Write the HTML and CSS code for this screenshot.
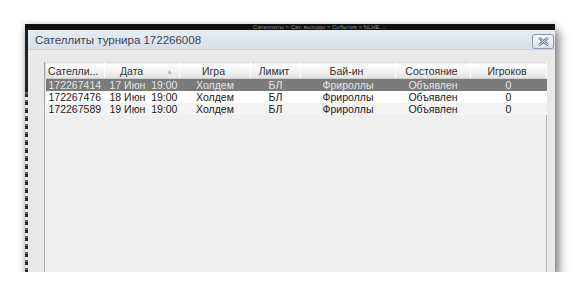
FILE: index.html
```html
<!DOCTYPE html>
<html lang="ru">
<head>
    <meta charset="UTF-8">
    <title>Сателлиты турнира 172266008</title>
    <link rel="stylesheet" href="styles.css">
</head>
<body>
    <div class="frame">
        <div class="topbar"><span>Сателлиты &gt; Сат. выходы &gt; События &gt; NLHE ...</span></div>
        <div class="side"></div>
        <div class="dialog">
            <div class="titlebar">
                <span class="title">Сателлиты турнира 172266008</span>
                <button class="close" title="Закрыть">
                    <svg width="13" height="9" viewBox="0 0 13 9">
                        <path d="M2 1 L11 8 M11 1 L2 8" stroke="#5b6675" stroke-width="2.4" fill="none"/>
                        <path d="M2 1 L11 8 M11 1 L2 8" stroke="#f4f6f8" stroke-width="1" fill="none"/>
                    </svg>
                </button>
            </div>
            <div class="content">
                <div class="list">
                    <table class="grid">
                        <colgroup>
                            <col class="c1"><col class="c2"><col class="c3"><col class="c4">
                            <col class="c5"><col class="c6"><col class="c7">
                        </colgroup>
                        <thead>
                            <tr>
                                <th class="left">Сателли...</th>
                                <th>Дата <span class="sort">&#9650;</span></th>
                                <th>Игра</th>
                                <th>Лимит</th>
                                <th>Бай-ин</th>
                                <th>Состояние</th>
                                <th>Игроков</th>
                            </tr>
                        </thead>
                        <tbody>
                            <tr class="selected">
                                <td class="left">172267414</td>
                                <td class="date">17 Июн&nbsp;&nbsp;19:00</td>
                                <td>Холдем</td>
                                <td>БЛ</td>
                                <td>Фрироллы</td>
                                <td>Объявлен</td>
                                <td>0</td>
                            </tr>
                            <tr>
                                <td class="left">172267476</td>
                                <td class="date">18 Июн&nbsp;&nbsp;19:00</td>
                                <td>Холдем</td>
                                <td>БЛ</td>
                                <td>Фрироллы</td>
                                <td>Объявлен</td>
                                <td>0</td>
                            </tr>
                            <tr class="alt">
                                <td class="left">172267589</td>
                                <td class="date">19 Июн&nbsp;&nbsp;19:00</td>
                                <td>Холдем</td>
                                <td>БЛ</td>
                                <td>Фрироллы</td>
                                <td>Объявлен</td>
                                <td>0</td>
                            </tr>
                        </tbody>
                    </table>
                </div>
            </div>
        </div>
    </div>
</body>
</html>
```

FILE: styles.css
```css
body {
    margin: 0;
    background: #fff;
    font-family: "Liberation Sans", Arial, sans-serif;
}
.frame {
    margin: 24px 0 0 25px;
    width: 530px;
    height: 248px;
    box-sizing: border-box;
    display: grid;
    grid-template-columns: 3px minmax(0, 1fr);
    grid-template-rows: 6px minmax(0, 1fr);
    box-shadow: 4px 7px 10px rgba(0, 0, 0, 0.5), 0 0 6px rgba(0, 0, 0, 0.18);
    overflow: hidden;
}
.topbar {
    grid-column: 1 / 3;
    background: #121212;
    overflow: hidden;
    font-size: 6px;
    line-height: 6px;
    color: #8a8a8a;
    white-space: nowrap;
}
.topbar span { padding-left: 228px; }
.side {
    background:
        linear-gradient(#222 0 62px, transparent 62px),
        repeating-linear-gradient(180deg, #2b2b2b 0 3px, #e2e5ea 3px 6px, #55607a 6px 8px);
}
.dialog {
    display: flex;
    flex-direction: column;
    background: #e9e9e9;
    min-height: 0;
    min-width: 0;
}
.titlebar {
    height: 20px;
    flex: none;
    display: flex;
    align-items: center;
    justify-content: space-between;
    background: linear-gradient(#e6ecf3, #d7dfe9);
    border-bottom: 1px solid #c9d1db;
    box-sizing: border-box;
    padding: 0 1px 0 7px;
}
.title {
    font-size: 11.5px;
    color: #3a4350;
    padding-top: 1px;
}
.close {
    width: 22px;
    height: 15px;
    padding: 0;
    margin-top: 3px;
    border: 1px solid #8b97a8;
    border-radius: 3px;
    background: linear-gradient(#f5f7fa, #dde3ea);
    display: flex;
    align-items: center;
    justify-content: center;
}
.content {
    flex: 1;
    padding: 12px 8px 0 16px;
    display: flex;
    min-height: 0;
}
.list {
    flex: 1;
    min-width: 0;
    background: #efefef;
    border-left: 1px solid #a9a9a9;
    border-right: 1px solid #b5b5b5;
}
.grid {
    border-collapse: collapse;
    table-layout: fixed;
    width: 100%;
    font-size: 10.5px;
}
.grid th {
    height: 15px;
    padding: 0 3px 0 0;
    font-weight: normal;
    color: #333;
    background: linear-gradient(#ffffff, #f2f2f2 50%, #e3e3e3);
    border-right: 1px solid #fff;
    border-left: 1px solid #d2d2d2;
    border-top: 1px solid #dcdcdc;
    border-bottom: 1px solid #cfcfcf;
    white-space: nowrap;
    overflow: hidden;
}
.grid th.left { text-align: left; padding-left: 2px; }
.sort {
    font-size: 7px;
    color: #b8b8b8;
    margin-left: 20px;
    margin-right: -12px;
    vertical-align: 1px;
}
.c1 { width: 59px; }
.c2 { width: 75px; }
.c3 { width: 71px; }
.c4 { width: 50px; }
.c5 { width: 95px; }
.c6 { width: 75px; }
.c7 { width: 76px; }
.grid td {
    height: 12px;
    padding: 0;
    text-align: center;
    color: #1a1a1a;
    line-height: 12px;
    white-space: nowrap;
    background: #fff;
}
.grid td.left { text-align: left; padding-left: 3px; }
.grid td.date { text-align: left; padding-left: 5px; }
.grid tr.alt td { background: #f4f4f4; }
.grid tr.selected td {
    background: #7b7b7b;
    color: #e4e4e4;
}
```
